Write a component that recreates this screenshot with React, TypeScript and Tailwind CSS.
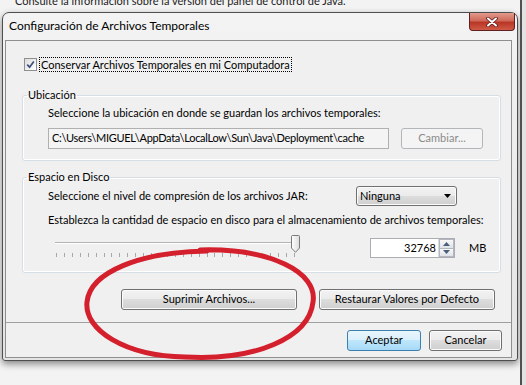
import type { ReactNode } from 'react';

const btnSkin =
  'rounded-[3px] border border-[#707070] bg-[linear-gradient(#f2f2f2_0%,#ebebeb_49%,#dddddd_50%,#cfcfcf_100%)] shadow-[inset_0_0_0_1px_#fbfbfb]';
const btn = `flex items-center justify-center ${btnSkin}`;

function Group({ title, className, children }: { title: string; className?: string; children: ReactNode }) {
  return (
    <fieldset className={`rounded-[3px] border border-[#d5dfe5] shadow-[inset_0_0_0_1px_#ffffff] ${className ?? ''}`}>
      <legend className="ml-[4px] px-[1px] leading-[14px]">{title}</legend>
      {children}
    </fieldset>
  );
}

function Checkbox() {
  return (
    <span className="flex h-[13px] w-[13px] items-center justify-center border border-[#8e8f8f] bg-[linear-gradient(135deg,#dcdcdc,#ffffff)]">
      <svg viewBox="0 0 9 9" className="h-[9px] w-[9px]">
        <path d="M1.2 4.6 L3.6 7.2 L7.8 1.4" stroke="#3d4f7d" strokeWidth="1.7" fill="none" />
      </svg>
    </span>
  );
}

function Slider() {
  const ticks = Array.from({ length: 31 });
  return (
    <div className="relative h-[23px] w-[252px]">
      <div className="ml-[7px] mt-[8px] h-[2px] w-[240px] border-t border-[#b4b4b4] border-b border-b-white" />
      <div className="ml-[8px] mt-[9px] flex w-[239px] justify-between">
        {ticks.map((_, i) => (
          <span key={i} className="h-[4px] w-px bg-[#a8a8a8]" />
        ))}
      </div>
      <svg viewBox="0 0 9 18" className="absolute left-[243px] top-[1px] h-[18px] w-[9px]">
        <defs>
          <linearGradient id="thumb" x1="0" x2="1">
            <stop offset="0" stopColor="#ffffff" />
            <stop offset="1" stopColor="#dcdcdc" />
          </linearGradient>
        </defs>
        <path d="M0.5 1.5 Q0.5 0.5 1.5 0.5 H7.5 Q8.5 0.5 8.5 1.5 V13 L4.5 17.3 L0.5 13 Z" fill="url(#thumb)" stroke="#7a7a7a" />
      </svg>
    </div>
  );
}

function Spinner() {
  return (
    <div className="mt-[4px] flex h-[20px] w-[85px] border border-[#abadb3] bg-white">
      <span className="flex flex-1 items-center justify-end pr-[2px]">32768</span>
      <div className="flex w-[16px] flex-col border-l border-[#d9d9d9]">
        <span className="flex flex-1 items-center justify-center border border-[#b3b8c0] bg-[linear-gradient(#f8f8f8,#dfe3e8)]">
          <svg viewBox="0 0 7 4" className="h-[4px] w-[7px]"><path d="M0 4 L3.5 0 L7 4 Z" fill="#4b5d7c" /></svg>
        </span>
        <span className="flex flex-1 items-center justify-center border border-t-0 border-[#b3b8c0] bg-[linear-gradient(#f8f8f8,#dfe3e8)]">
          <svg viewBox="0 0 7 4" className="h-[4px] w-[7px]"><path d="M0 0 L3.5 4 L7 0 Z" fill="#4b5d7c" /></svg>
        </span>
      </div>
    </div>
  );
}

function Dialog() {
  return (
    <div className="ml-[2px] flex h-[349px] w-[516px] flex-col rounded-t-[7px] rounded-b-[3px] border border-[#4e4e4e] bg-[linear-gradient(#f3f3f3,#e4e4e4)] pb-[2px] pl-[2px] pr-[5px] shadow-[0_3px_7px_rgba(0,0,0,0.45)]">
      <div className="flex h-[27px] items-start justify-between">
        <span className="mt-[6px] pl-[4px] text-[12px] leading-[14px]">Configuración de Archivos Temporales</span>
        <div className="-mr-[3px] flex h-[18px] w-[46px] items-center justify-center rounded-b-[4px] border border-t-0 border-[#5e2020] bg-[linear-gradient(#e29a8c_0%,#cf6a5b_45%,#b93524_55%,#cf5a45_100%)]">
          <svg viewBox="0 0 12 10" className="h-[10px] w-[12px]">
            <path d="M2 1.5 L10 8.5 M10 1.5 L2 8.5" stroke="#5a1d1d" strokeWidth="3.6" strokeLinecap="round" />
            <path d="M2 1.5 L10 8.5 M10 1.5 L2 8.5" stroke="#ffffff" strokeWidth="2" strokeLinecap="round" />
          </svg>
        </div>
      </div>

      <div className="flex flex-1 flex-col border border-[#8f8f8f] bg-[#f0f0f0]">
        <div className="pl-[16px] pr-[10px] pt-[15px]">
          <div className="flex h-[16px] items-center pl-[2px]">
            <Checkbox />
            <span className="ml-[2px] border border-dotted border-black px-[1px] leading-[13px]">
              Conservar Archivos Temporales en mi Computadora
            </span>
          </div>

          <Group title="Ubicación" className="mt-[16px]">
            <div className="pb-[11px] pl-[25px] pt-[4px]">
              <p className="leading-[14px]">Seleccione la ubicación en donde se guardan los archivos temporales:</p>
              <div className="mt-[8px] flex gap-[12px]">
                <div className="flex h-[21px] w-[341px] items-center border border-[#b0b0b0] bg-[#f4f4f4] pl-[3px] tracking-[-0.3px]">
                  C:\Users\MIGUEL\AppData\LocalLow\Sun\Java\Deployment\cache
                </div>
                <div className="flex h-[21px] w-[82px] items-center justify-center rounded-[3px] border border-[#b3b6b8] bg-[#f4f4f4] text-[#8a8a8a]">
                  Cambiar...
                </div>
              </div>
            </div>
          </Group>

          <Group title="Espacio en Disco" className="mt-[9px]">
            <div className="pb-[14px] pl-[25px]">
              <div className="mt-[2px] flex h-[20px] items-center">
                <span className="w-[308px]">Seleccione el nivel de compresión de los archivos JAR:</span>
                <div className={`${btnSkin} flex h-[20px] w-[101px] items-center justify-between pl-[3px] pr-[5px]`}>
                  <span>Ninguna</span>
                  <svg viewBox="0 0 7 4" className="h-[4px] w-[7px]"><path d="M0 0 L3.5 4 L7 0 Z" fill="#000" /></svg>
                </div>
              </div>
              <p className="mt-[7px] leading-[14px]">
                Establezca la cantidad de espacio en disco para el almacenamiento de archivos temporales:
              </p>
              <div className="mt-[7px] flex items-start">
                <Slider />
                <div className="ml-[70px]">
                  <Spinner />
                </div>
                <span className="ml-[14px] mt-[4px] flex h-[20px] items-center">MB</span>
              </div>
            </div>
          </Group>

          <div className="mt-[16px] flex justify-end gap-[22px] pr-[6px]">
            <div className={`${btn} h-[21px] w-[176px]`}>Suprimir Archivos...</div>
            <div className={`${btn} h-[21px] w-[176px]`}>Restaurar Valores por Defecto</div>
          </div>
        </div>

        <div className="mt-[12px] flex flex-1 items-center justify-end gap-[8px] border-t border-[#a0a0a0] pr-[9px]">
          <div className="flex h-[21px] w-[74px] items-center justify-center rounded-[3px] border border-[#3c7fb1] bg-[linear-gradient(#eaf6fd_0%,#d9f0fc_49%,#bee6fd_50%,#a7d9f5_100%)]">
            Aceptar
          </div>
          <div className={`${btn} h-[21px] w-[73px]`}>Cancelar</div>
        </div>
      </div>
    </div>
  );
}

export default function App() {
  return (
    <div className="relative h-[385px] w-[526px] overflow-hidden bg-[#f3f3f3] font-['Lato','Noto_Sans',sans-serif] text-[11px] text-black">
      <div className="flex h-full">
        <div className="flex w-[520px] flex-col">
          <div className="h-[12px] overflow-hidden pl-[15px]">
            <p className="-mt-[6px] whitespace-nowrap text-[11px] leading-[14px] text-[#222]">
              Consulte la información sobre la versión del panel de control de Java.
            </p>
          </div>
          <Dialog />
        </div>
        <div className="w-[2px] bg-[#505050]" />
        <div className="flex-1 bg-[#e2e2e2]" />
      </div>

      <svg viewBox="0 0 526 385" className="pointer-events-none absolute left-0 top-0 h-[385px] w-[526px]">
        <path
          d="M200 250 C270 248 318 272 313 302 C309 338 255 361 185 357 C125 356 84 330 87 302 C90 272 140 252 207 251"
          fill="none"
          stroke="#d41f2d"
          strokeWidth="5"
          strokeLinecap="round"
        />
      </svg>
    </div>
  );
}
